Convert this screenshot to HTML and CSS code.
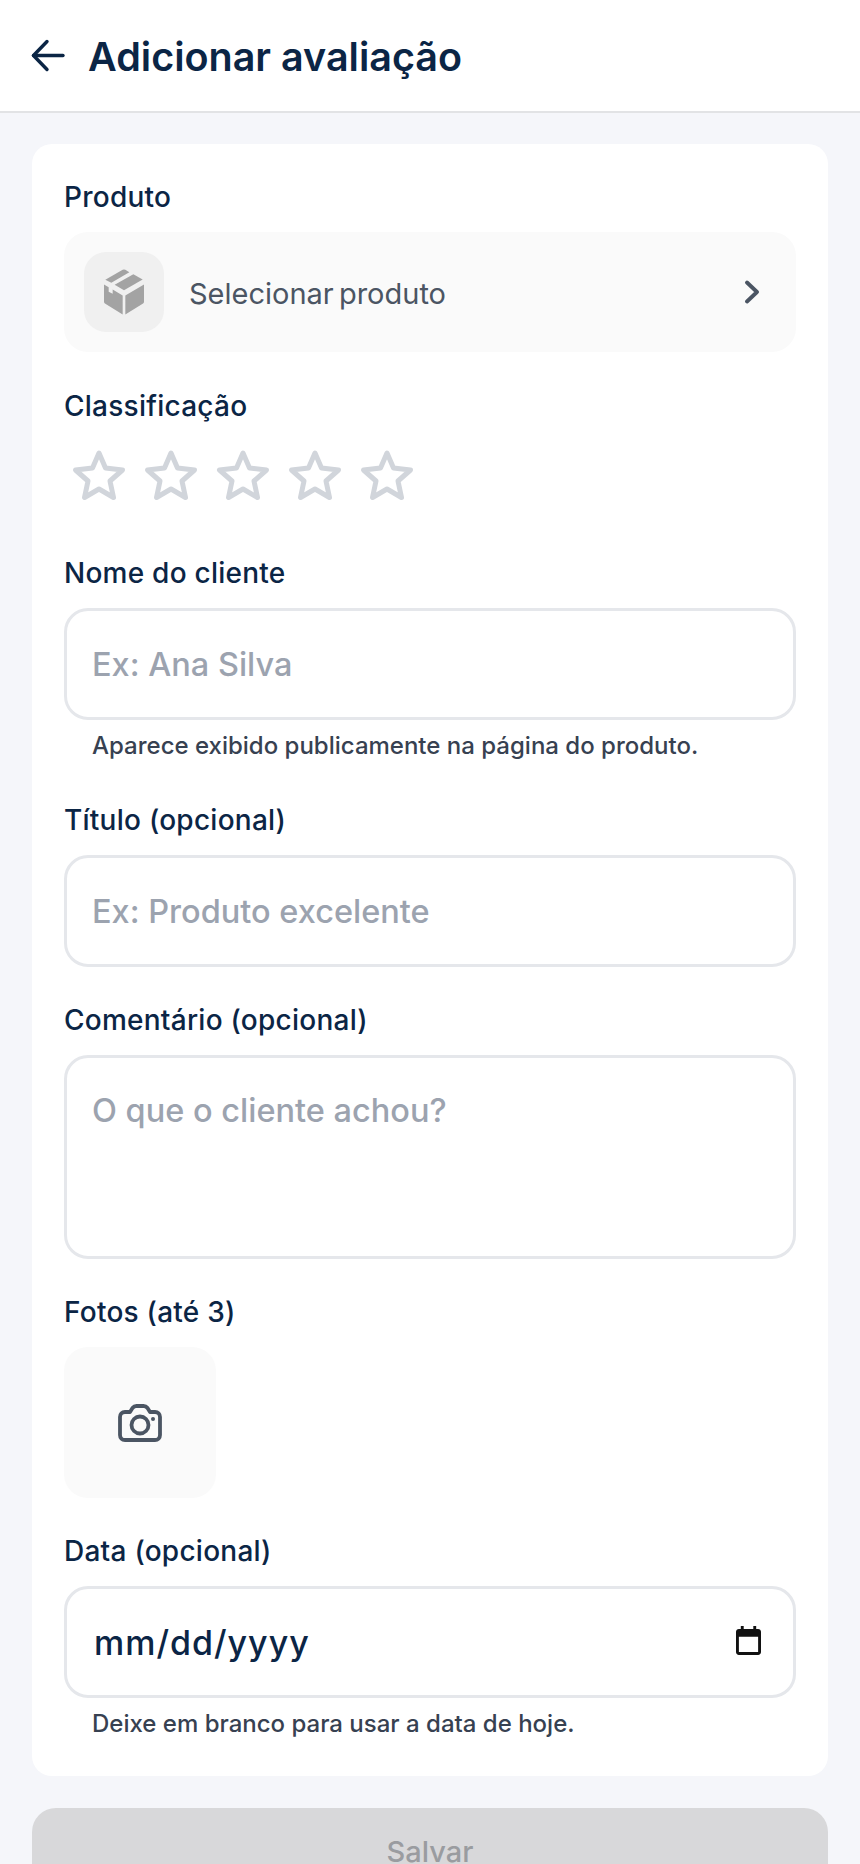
FILE: index.html
```html
<!DOCTYPE html>
<html lang="pt">
<head>
<meta charset="utf-8">
<title>Adicionar avaliação</title>
<link rel="stylesheet" href="styles.css">
</head>
<body>
<header class="topbar">
  <svg class="back" viewBox="0 0 36 36" width="36" height="36" fill="none" stroke="#0b2545" stroke-width="3.4" stroke-linecap="round" stroke-linejoin="round"><path d="M33 17.500H3.500"/><path d="M17 3.500 3.500 17.500 17 31.500"/></svg>
  <h1 class="title">Adicionar avaliação</h1>
</header>
<main class="content">
  <form class="card">
    <section class="field">
      <div class="label">Produto</div>
      <div class="picker">
        <div class="picker-thumb">
          <svg viewBox="0 0 120 137" width="40" height="46" fill="#a3a3a3"><path d="M4 32 56 2Q60 0 64 2L76 9 22 41z"/><path d="M88 15 116 31 60 63 32 47z"/><path d="M0 46 14 54V68L26 74V61L56 79V136L4 104Q0 102 0 98z"/><path d="M64 79 120 46V98Q120 102 116 104L64 136z"/></svg>
        </div>
        <span class="picker-text">Selecionar produto</span>
        <svg class="chev" viewBox="0 0 16 24" width="16" height="24" fill="none" stroke="#4b5563" stroke-width="3.800" stroke-linecap="round" stroke-linejoin="round"><path d="M3 2.500 13 12 3 21.500"/></svg>
      </div>
    </section>
    <section class="field field-stars">
      <div class="label">Classificação</div>
      <div class="stars">
        <svg viewBox="0 0 60 58" width="60" height="58" fill="none" stroke="#d1d5db" stroke-width="5" stroke-linejoin="round"><path d="M30 6 36.500 21 53.500 23 41 34 44.500 50.500 30 42 15.500 50.500 19 34 6.500 23 23.500 21z"/></svg>
        <svg viewBox="0 0 60 58" width="60" height="58" fill="none" stroke="#d1d5db" stroke-width="5" stroke-linejoin="round"><path d="M30 6 36.500 21 53.500 23 41 34 44.500 50.500 30 42 15.500 50.500 19 34 6.500 23 23.500 21z"/></svg>
        <svg viewBox="0 0 60 58" width="60" height="58" fill="none" stroke="#d1d5db" stroke-width="5" stroke-linejoin="round"><path d="M30 6 36.500 21 53.500 23 41 34 44.500 50.500 30 42 15.500 50.500 19 34 6.500 23 23.500 21z"/></svg>
        <svg viewBox="0 0 60 58" width="60" height="58" fill="none" stroke="#d1d5db" stroke-width="5" stroke-linejoin="round"><path d="M30 6 36.500 21 53.500 23 41 34 44.500 50.500 30 42 15.500 50.500 19 34 6.500 23 23.500 21z"/></svg>
        <svg viewBox="0 0 60 58" width="60" height="58" fill="none" stroke="#d1d5db" stroke-width="5" stroke-linejoin="round"><path d="M30 6 36.500 21 53.500 23 41 34 44.500 50.500 30 42 15.500 50.500 19 34 6.500 23 23.500 21z"/></svg>
      </div>
    </section>
    <section class="field">
      <div class="label">Nome do cliente</div>
      <div class="input"><span class="placeholder">Ex: Ana Silva</span></div>
      <div class="hint">Aparece exibido publicamente na página do produto.</div>
    </section>
    <section class="field">
      <div class="label">Título (opcional)</div>
      <div class="input"><span class="placeholder">Ex: Produto excelente</span></div>
    </section>
    <section class="field">
      <div class="label">Comentário (opcional)</div>
      <div class="input textarea"><span class="placeholder">O que o cliente achou?</span></div>
    </section>
    <section class="field">
      <div class="label">Fotos (até 3)</div>
      <div class="photo">
        <svg viewBox="0 0 44 38" width="44" height="38" fill="none" stroke="#4b5563" stroke-width="3.800" stroke-linejoin="round"><path d="M12 8 14.500 4C15.500 2.700 16.800 2 18.500 2h7C27.200 2 28.500 2.700 29.500 4L32 8h5C40 8 42 10 42 13v18C42 34 40 36 37 36H7C4 36 2 34 2 31V13C2 10 4 8 7 8z"/><circle cx="22" cy="21" r="8.500"/><circle cx="35" cy="15" r="2" fill="#4b5563" stroke="none"/></svg>
      </div>
    </section>
    <section class="field">
      <div class="label">Data (opcional)</div>
      <div class="input date">
        <span class="date-value">mm/dd/yyyy</span>
        <svg class="calendar" viewBox="0 0 26 30" width="25" height="29"><path fill="#111" d="M5 0h3v3h10V0h3v3h2c1.700 0 3 1.300 3 3v21c0 1.700-1.300 3-3 3H3c-1.700 0-3-1.300-3-3V6c0-1.700 1.300-3 3-3h2zM3 11v16h20V11z"/></svg>
      </div>
      <div class="hint">Deixe em branco para usar a data de hoje.</div>
    </section>
  </form>
  <button class="save" type="button">Salvar</button>
</main>
</body>
</html>
```

FILE: styles.css
```css
* { box-sizing: border-box; }
html, body { margin: 0; height: 1864px; overflow: hidden; }
body {
  background: #f5f6fa;
  font-family: Inter, "Noto Sans", sans-serif;
  color: #0b2545;
}
.topbar {
  height: 113px;
  background: #fff;
  border-bottom: 2px solid #e2e3e5;
  display: flex;
  align-items: center;
  padding: 0 0 0 30px;
  gap: 22px;
}
.back { flex: none; }
.title { margin: 0; font-size: 39.500px; font-weight: 600; padding-top: 2px; }
.content { padding: 31px 32px 0; display: flex; flex-direction: column; gap: 32px; }
.card {
  background: #fff;
  border-radius: 20px;
  padding: 35px 32px 31px;
  display: flex;
  flex-direction: column;
  gap: 35px;
}
.label { font-size: 28px; font-weight: 550; letter-spacing: 0.25px; line-height: 36px; margin-bottom: 17px; }
.picker {
  height: 120px;
  background: #fafafa;
  border-radius: 24px;
  display: flex;
  align-items: center;
  padding: 0 36px 0 20px;
}
.picker-thumb {
  width: 80px; height: 80px;
  border-radius: 22px;
  background: #f0f0f0;
  display: flex; align-items: center; justify-content: center;
  flex: none;
}
.picker-text { flex: 1; margin-left: 25px; font-size: 29px; word-spacing: -3px; color: #4b5563; padding-top: 2px; }
.field-stars { margin-top: 1px; }
.stars { display: flex; gap: 12px; padding-left: 5px; margin: 23px 0 15px; }
.input {
  height: 112px;
  border: 3.500px solid #e5e7eb;
  border-radius: 24px;
  background: #fff;
  display: flex;
  align-items: center;
  padding: 0 25px;
}
.placeholder { font-size: 32.500px; font-weight: 500; color: #9ca3af; }
.textarea { height: 204px; align-items: flex-start; padding-top: 33px; }
.hint { font-size: 24px; font-weight: 500; color: #374151; line-height: 32px; margin: 10px 0 5px 28px; }
.photo {
  width: 152px; height: 151px;
  border-radius: 24px;
  background: #fafafa;
  display: flex; align-items: center; justify-content: center;
}
.date { justify-content: space-between; padding-right: 32px; }
.date-value { font-size: 34px; font-weight: 550; letter-spacing: 1px; margin-left: 2px; color: #0b2545; }
.calendar { margin-bottom: 4px; }
.save {
  display: block;
  width: 100%;
  height: 100px;
  border: 0;
  border-radius: 24px;
  background: #d8d8da;
  color: #9a9ca0;
  font: 500 29px Inter, "Noto Sans", sans-serif;
  padding: 0 0 14px;
  flex: none;
}
```
